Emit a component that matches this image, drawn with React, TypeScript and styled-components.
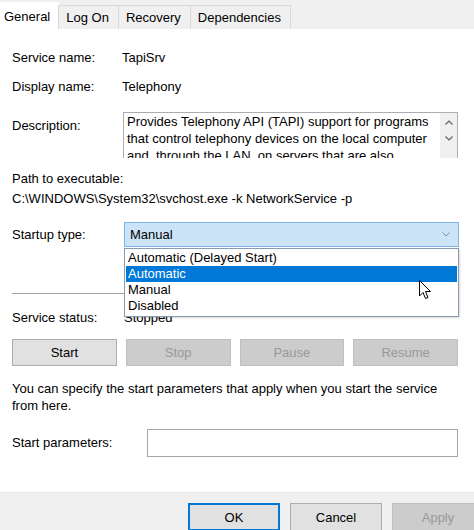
import React from "react";
import styled, { createGlobalStyle } from "styled-components";

const GlobalStyle = createGlobalStyle`
  html, body {
    margin: 0;
    padding: 0;
    background: #ffffff;
  }
`;

const Window = styled.div`
  position: relative;
  width: 474px;
  height: 530px;
  overflow: hidden;
  display: flex;
  flex-direction: column;
  background: #ffffff;
  font-family: "Liberation Sans", Arial, sans-serif;
  font-size: 13px;
  color: #000000;
`;

const TabStrip = styled.div`
  height: 29px;
  flex-shrink: 0;
  display: flex;
  align-items: flex-end;
  background: #f0f0f0;
`;

const Tab = styled.div<{ $active?: boolean }>`
  box-sizing: border-box;
  height: ${(p) => (p.$active ? "27px" : "24px")};
  padding: ${(p) => (p.$active ? "0 8px 0 3px" : "0 9px 0 7px")};
  display: flex;
  align-items: center;
  background: ${(p) => (p.$active ? "#ffffff" : "#f0f0f0")};
  border: 1px solid ${(p) => (p.$active ? "#ffffff" : "#d9d9d9")};
  border-bottom: none;
  margin-left: ${(p) => (p.$active ? "0" : "-1px")};
  white-space: nowrap;
`;

const Content = styled.div`
  flex: 1;
  display: flex;
  flex-direction: column;
  padding: 0 16px 0 12px;
`;

const Row = styled.div<{ $top: number; $label?: number }>`
  display: grid;
  grid-template-columns: ${(p) => p.$label ?? 110}px 1fr;
  align-items: center;
  margin-top: ${(p) => p.$top}px;
  line-height: 16px;
  position: relative;
`;

const TopLabel = styled.div`
  align-self: start;
  padding-top: 6px;
`;

const DescBox = styled.div`
  box-sizing: border-box;
  height: 46px;
  margin-left: 1px;
  display: flex;
  border: 1px solid #abadb3;
  border-bottom: none;
  overflow: hidden;
`;

const DescText = styled.div`
  flex: 1;
  padding: 0 0 0 3px;
  line-height: 17px;
  white-space: nowrap;
  overflow: hidden;
`;

const ScrollBar = styled.div`
  width: 17px;
  flex-shrink: 0;
  background: #f0f0f0;
  display: flex;
  flex-direction: column;
  align-items: center;
  padding-top: 7px;
  gap: 11px;
`;

const Block = styled.div<{ $top: number }>`
  margin-top: ${(p) => p.$top}px;
  line-height: 20px;
`;

const ComboWrap = styled.div`
  position: relative;
  margin-left: 2px;
  margin-right: -1px;
`;

const Combo = styled.div`
  box-sizing: border-box;
  height: 25px;
  display: flex;
  align-items: center;
  justify-content: space-between;
  padding: 0 8px 0 5px;
  background: #cce4f7;
  border: 1px solid #7eb4ea;
`;

const DropList = styled.div`
  position: absolute;
  left: 0;
  right: 0;
  top: 26px;
  z-index: 5;
  box-sizing: border-box;
  padding: 1px 1px 2px 1px;
  background: #ffffff;
  border: 1px solid #8a9bb0;
  box-shadow: 1px 1px 2px rgba(0, 0, 0, 0.15);
`;

const DropItem = styled.div<{ $selected?: boolean }>`
  height: 16px;
  line-height: 16px;
  padding-left: 2px;
  background: ${(p) => (p.$selected ? "#0078d7" : "transparent")};
  color: ${(p) => (p.$selected ? "#ffffff" : "#000000")};
`;

const Separator = styled.div<{ $top: number }>`
  margin-top: ${(p) => p.$top}px;
  height: 1px;
  background: #a0a0a0;
`;

const ButtonRow = styled.div<{ $top: number }>`
  margin-top: ${(p) => p.$top}px;
  display: grid;
  grid-template-columns: repeat(4, 1fr);
  gap: 9px;
`;

const Button = styled.div<{ $disabled?: boolean; $default?: boolean }>`
  box-sizing: border-box;
  height: 27px;
  display: flex;
  align-items: center;
  justify-content: center;
  background: ${(p) => (p.$disabled ? "#cccccc" : "#e1e1e1")};
  border: 1px solid
    ${(p) => (p.$default ? "#0078d7" : p.$disabled ? "#bfbfbf" : "#adadad")};
  box-shadow: ${(p) => (p.$default ? "inset 0 0 0 1px #0078d7" : "none")};
  color: ${(p) => (p.$disabled ? "#999999" : "#000000")};
`;

const HelpText = styled.p<{ $top: number }>`
  margin: ${(p) => p.$top}px 0 0 0;
  line-height: 17px;
`;

const TextInput = styled.div`
  box-sizing: border-box;
  height: 28px;
  background: #ffffff;
  border: 1px solid #a6a6a6;
`;

const Footer = styled.div`
  box-sizing: border-box;
  height: 38px;
  flex-shrink: 0;
  display: flex;
  justify-content: flex-end;
  gap: 10px;
  padding: 10px 0 0 0;
  margin-right: -10px;
  background: #f0f0f0;
  border-top: 1px solid #e6e6e6;
`;

const FooterButton = styled(Button)`
  width: 92px;
  height: 28px;
  flex-shrink: 0;
`;

const Cursor = styled.svg`
  position: absolute;
  left: 419px;
  top: 280px;
  z-index: 10;
`;

const Chevron = () => (
  <svg width="8" height="5" viewBox="0 0 8 5">
    <path d="M0.5 0.5 L4 4 L7.5 0.5" fill="none" stroke="#8a8a8a" strokeWidth="1" />
  </svg>
);

const ArrowUp = () => (
  <svg width="8" height="5" viewBox="0 0 8 5">
    <path d="M0.5 4.5 L4 1 L7.5 4.5" fill="none" stroke="#606060" strokeWidth="1.2" />
  </svg>
);

const ArrowDown = () => (
  <svg width="8" height="5" viewBox="0 0 8 5">
    <path d="M0.5 0.5 L4 4 L7.5 0.5" fill="none" stroke="#606060" strokeWidth="1.2" />
  </svg>
);

const startupOptions = ["Automatic (Delayed Start)", "Automatic", "Manual", "Disabled"];

const App = () => {
  return (
    <>
      <GlobalStyle />
      <Window>
        <TabStrip>
          <Tab $active>General</Tab>
          <Tab>Log On</Tab>
          <Tab>Recovery</Tab>
          <Tab>Dependencies</Tab>
        </TabStrip>

        <Content>
          <Row $top={21}>
            <span>Service name:</span>
            <span>TapiSrv</span>
          </Row>
          <Row $top={13}>
            <span>Display name:</span>
            <span>Telephony</span>
          </Row>
          <Row $top={17}>
            <TopLabel>Description:</TopLabel>
            <DescBox>
              <DescText>
                Provides Telephony API (TAPI) support for programs
                <br />
                that control telephony devices on the local computer
                <br />
                and, through the LAN, on servers that are also
              </DescText>
              <ScrollBar>
                <ArrowUp />
                <ArrowDown />
              </ScrollBar>
            </DescBox>
          </Row>

          <Block $top={11}>
            Path to executable:
            <br />
            C:\WINDOWS\System32\svchost.exe -k NetworkService -p
          </Block>

          <Row $top={13}>
            <span>Startup type:</span>
            <ComboWrap>
              <Combo>
                <span>Manual</span>
                <Chevron />
              </Combo>
              <DropList>
                {startupOptions.map((o) => (
                  <DropItem key={o} $selected={o === "Automatic"}>
                    {o}
                  </DropItem>
                ))}
              </DropList>
            </ComboWrap>
          </Row>

          <Separator $top={46} />

          <Row $top={16}>
            <span>Service status:</span>
            <span style={{ marginLeft: 2 }}>Stopped</span>
          </Row>

          <ButtonRow $top={13}>
            <Button>Start</Button>
            <Button $disabled>Stop</Button>
            <Button $disabled>Pause</Button>
            <Button $disabled>Resume</Button>
          </ButtonRow>

          <HelpText $top={14}>
            You can specify the start parameters that apply when you start the service
            <br />
            from here.
          </HelpText>

          <Row $top={15} $label={135}>
            <span>Start parameters:</span>
            <TextInput />
          </Row>
        </Content>

        <Footer>
          <FooterButton $default>OK</FooterButton>
          <FooterButton>Cancel</FooterButton>
          <FooterButton $disabled>Apply</FooterButton>
        </Footer>

        <Cursor width="13" height="20" viewBox="0 0 13 20">
          <path
            d="M0.5 0.5 L0.5 16 L4 12.5 L6.5 18.5 L9 17.5 L6.5 11.5 L11.5 11.5 Z"
            fill="#ffffff"
            stroke="#000000"
            strokeWidth="1"
            strokeLinejoin="round"
          />
        </Cursor>
      </Window>
    </>
  );
};

export default App;
